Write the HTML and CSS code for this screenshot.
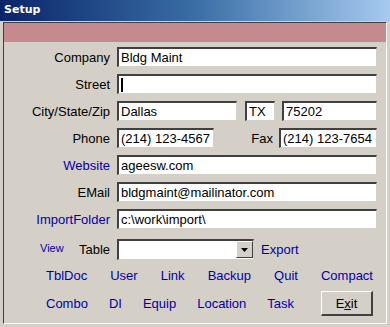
FILE: index.html
```html
<!DOCTYPE html>
<html lang="en">

<head>
    <meta charset="UTF-8">
    <title>Setup</title>
    <link rel="stylesheet" href="styles.css">
</head>

<body>
    <div class="window">
        <div class="titlebar">Setup</div>
        <div class="panel">
            <div class="band"></div>
            <div class="form">
                <div class="row">
                    <label class="lbl">Company</label>
                    <div class="box grow">Bldg Maint</div>
                </div>
                <div class="row">
                    <label class="lbl">Street</label>
                    <div class="box grow"><span class="caret"></span></div>
                </div>
                <div class="row">
                    <label class="lbl">City/State/Zip</label>
                    <div class="box city">Dallas</div>
                    <div class="box state">TX</div>
                    <div class="box grow">75202</div>
                </div>
                <div class="row">
                    <label class="lbl">Phone</label>
                    <div class="box phone">(214) 123-4567</div>
                    <label class="fax">Fax</label>
                    <div class="box grow">(214) 123-7654</div>
                </div>
                <div class="row">
                    <label class="lbl link">Website</label>
                    <div class="box grow">ageesw.com</div>
                </div>
                <div class="row">
                    <label class="lbl">EMail</label>
                    <div class="box grow">bldgmaint@mailinator.com</div>
                </div>
                <div class="row">
                    <label class="lbl link">ImportFolder</label>
                    <div class="box grow">c:\work\import\</div>
                </div>
                <div class="row table-row">
                    <div class="lbl split">
                        <span class="view link">View</span>
                        <span>Table</span>
                    </div>
                    <div class="box combo">
                        <span class="drop">
                            <svg width="7" height="4" viewBox="0 0 7 4"><path d="M0 0h7L3.5 4z" fill="#000"/></svg>
                        </span>
                    </div>
                    <span class="link export">Export</span>
                </div>
                <div class="cmds first">
                    <span class="link">TblDoc</span>
                    <span class="link">User</span>
                    <span class="link">Link</span>
                    <span class="link">Backup</span>
                    <span class="link">Quit</span>
                    <span class="link">Compact</span>
                </div>
                <div class="cmds">
                    <span class="link">Combo</span>
                    <span class="link">DI</span>
                    <span class="link">Equip</span>
                    <span class="link">Location</span>
                    <span class="link">Task</span>
                    <button class="exit">E<u>x</u>it</button>
                </div>
            </div>
        </div>
    </div>
</body>

</html>
```

FILE: styles.css
```css
* {
    margin: 0;
    padding: 0;
    box-sizing: border-box;
}

body {
    width: 390px;
    height: 327px;
    background-color: #d4d0c8;
    font-family: "Liberation Sans", Arial, sans-serif;
    font-size: 13px;
    color: #000;
    overflow: hidden;
}

.window {
    height: 327px;
    padding: 0 3px 3px 3px;
    display: flex;
    flex-direction: column;
}

.titlebar {
    height: 21px;
    margin: 0 -3px;
    padding: 3px 4px 0;
    background: linear-gradient(to right, #0a246a 0%, #3a6ea5 50%, #a6caf0 100%);
    color: #fff;
    font-family: "DejaVu Sans", sans-serif;
    font-weight: bold;
    font-size: 11px;
}

.panel {
    flex: 1;
    margin-top: 1px;
    border-top: 1px solid #404040;
    border-left: 1px solid #404040;
    border-right: 1px solid #fff;
    border-bottom: 1px solid #fff;
}

.band {
    height: 19px;
    background-color: #c48a8e;
}

.form {
    padding: 5px 9px 0 0;
    display: flex;
    flex-direction: column;
    gap: 7px;
}

.row {
    display: flex;
    align-items: center;
    height: 20px;
    gap: 7px;
}

.lbl {
    width: 106px;
    text-align: right;
    flex: none;
}

.link {
    color: #0000a8;
}

.box {
    height: 20px;
    background-color: #fff;
    border-top: 2px solid #404040;
    border-left: 2px solid #404040;
    border-right: 1px solid #d4d0c8;
    border-bottom: 1px solid #d4d0c8;
    padding: 1px 0 0 2px;
    line-height: 16px;
    white-space: nowrap;
    overflow: hidden;
}

.grow {
    flex: 1;
}

.city {
    width: 120px;
}

.state {
    width: 30px;
    margin-left: 1px;
}

.phone {
    width: 97px;
}

.fax {
    width: 52px;
    text-align: right;
    margin-right: -1px;
}

.caret {
    display: inline-block;
    width: 2px;
    height: 14px;
    background-color: #000;
    margin-top: 1px;
}

.table-row {
    height: 21px;
    margin-top: 3px;
}

.split {
    display: flex;
    justify-content: space-between;
    align-items: center;
    padding-left: 36px;
}

.view {
    font-size: 11px;
    margin-top: -4px;
}

.combo {
    width: 137px;
    height: 21px;
    position: relative;
}

.drop {
    position: absolute;
    right: 0;
    top: 0;
    width: 17px;
    height: 17px;
    background-color: #d4d0c8;
    border-top: 1px solid #fff;
    border-left: 1px solid #fff;
    border-right: 1px solid #404040;
    border-bottom: 1px solid #404040;
    display: flex;
    align-items: center;
    justify-content: center;
}

.cmds {
    display: flex;
    align-items: center;
    justify-content: space-between;
    padding-left: 42px;
    margin-right: 4px;
}

.cmds.first {
    margin-top: 1px;
}

.cmds:not(.first) {
    justify-content: flex-start;
    gap: 21px;
    margin-top: 1px;
}

.exit {
    margin-left: auto;
    width: 52px;
    height: 25px;
    background-color: #d4d0c8;
    font-family: "Liberation Sans", Arial, sans-serif;
    font-size: 13px;
    border-top: 1px solid #fff;
    border-left: 1px solid #fff;
    border-right: 2px solid #404040;
    border-bottom: 2px solid #404040;
    color: #000;
}
```
